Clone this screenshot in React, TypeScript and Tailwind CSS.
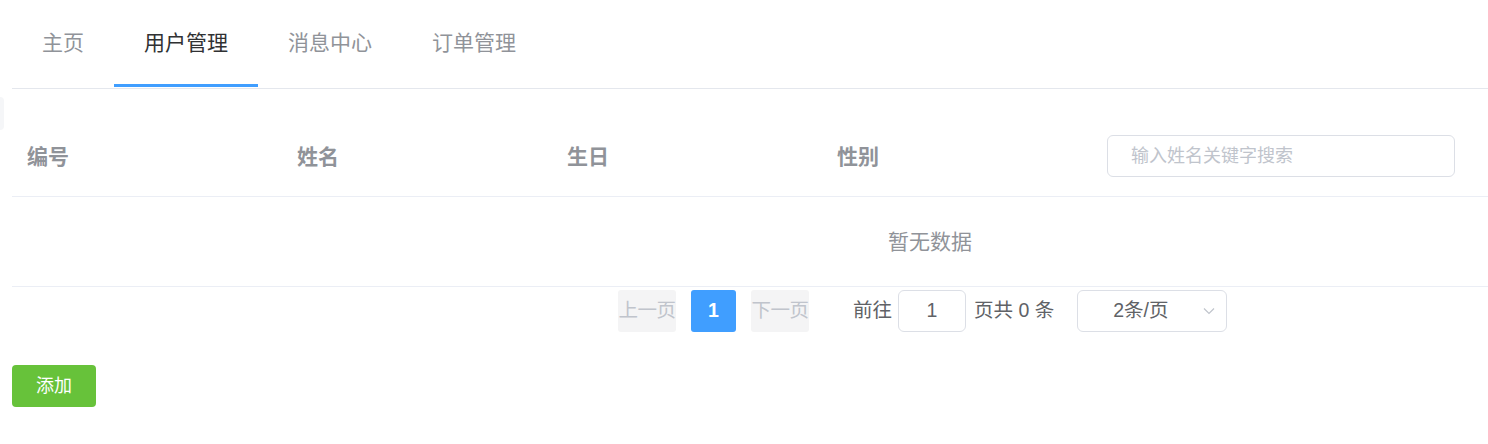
import React from "react";

const tabs = ["主页", "用户管理", "消息中心", "订单管理"];
const columns = ["编号", "姓名", "生日", "性别"];

export default function App() {
  const active = 1;

  return (
    <div
      className="relative w-[1488px] h-[444px] overflow-hidden bg-white pl-[12px]"
      style={{ fontFamily: '"Liberation Sans", "Noto Sans CJK SC", sans-serif' }}
    >
      {/* faint handle at the left edge */}
      <div className="absolute left-[-10px] top-[97px] w-[14px] h-[33px] rounded-[4px] bg-[#f5f6f8]" />

      {/* Tabs */}
      <div className="flex h-[89px] border-b border-[#e4e7ed]">
        {tabs.map((t, i) => (
          <div
            key={t}
            className={
              i === active
                ? "relative px-[30px] pt-[28px] text-[21px] leading-[30px] text-[#303133]"
                : "relative px-[30px] pt-[28px] text-[21px] leading-[30px] text-[#909399]"
            }
          >
            {t}
            {i === active && (
              <div className="absolute left-0 right-0 bottom-[1px] h-[3px] bg-[#409eff]" />
            )}
          </div>
        ))}
      </div>

      {/* Table header */}
      <div className="mt-[29px] flex h-[79px] items-center border-b border-[#ebeef5]">
        {columns.map((c) => (
          <div
            key={c}
            className="w-[270px] px-[15px] text-[21px] font-bold leading-[30px] text-[#909399]"
          >
            {c}
          </div>
        ))}
        <div className="flex-1 px-[15px] pb-[2px]">
          <input
            placeholder="输入姓名关键字搜索"
            className="box-border h-[42px] w-[348px] rounded-[6px] border border-[#dcdfe6] px-[23px] text-[18px] text-[#606266] outline-none placeholder:text-[#c0c4cc]"
          />
        </div>
      </div>

      {/* Empty body */}
      <div className="flex h-[90px] items-center border-b border-[#ebeef5]">
        <span className="ml-[876px] text-[21px] text-[#909399]">暂无数据</span>
      </div>

      {/* Pagination */}
      <div className="mt-[3px] flex h-[42px] items-center pl-[606px] text-[19.5px] text-[#606266]">
        <button className="flex h-[42px] w-[58px] items-center justify-center whitespace-nowrap rounded-[3px] bg-[#f4f4f5] p-0 tracking-[-0.5px] text-[#c0c4cc]">
          上一页
        </button>
        <button className="mx-[15px] h-[42px] w-[45px] rounded-[3px] bg-[#409eff] p-0 font-bold text-white">
          1
        </button>
        <button className="flex h-[42px] w-[58px] items-center justify-center whitespace-nowrap rounded-[3px] bg-[#f4f4f5] p-0 tracking-[-0.5px] text-[#c0c4cc]">
          下一页
        </button>
        <span className="ml-[44px]">前往</span>
        <div className="ml-[6px] flex h-[42px] w-[68px] items-center justify-center rounded-[6px] border border-[#dcdfe6]">
          1
        </div>
        <span className="ml-[8px] whitespace-pre">页共 0 条</span>
        <div className="ml-[23px] flex h-[42px] w-[150px] items-center rounded-[6px] border border-[#dcdfe6] pl-[35px] pr-[10px]">
          <span className="flex-1">2条/页</span>
          <svg width="14" height="14" viewBox="0 0 14 14" fill="none" className="text-[#c0c4cc]">
            <path d="M2 4.5 L7 9.5 L12 4.5" stroke="currentColor" strokeWidth="1.2" />
          </svg>
        </div>
      </div>

      {/* Add button */}
      <button className="mt-[33px] h-[42px] w-[84px] rounded-[4px] bg-[#67c23a] text-[18px] text-white">
        添加
      </button>
    </div>
  );
}
